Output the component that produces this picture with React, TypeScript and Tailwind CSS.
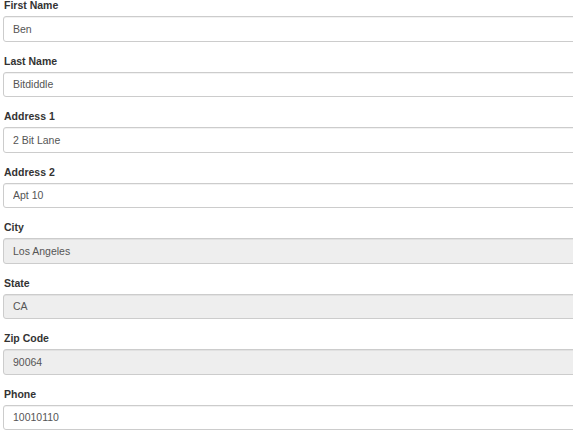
const fields = [
  { label: 'First Name', value: 'Ben', disabled: false },
  { label: 'Last Name', value: 'Bitdiddle', disabled: false },
  { label: 'Address 1', value: '2 Bit Lane', disabled: false },
  { label: 'Address 2', value: 'Apt 10', disabled: false },
  { label: 'City', value: 'Los Angeles', disabled: true },
  { label: 'State', value: 'CA', disabled: true },
  { label: 'Zip Code', value: '90064', disabled: true },
  { label: 'Phone', value: '10010110', disabled: false },
]

export default function App() {
  return (
    <div className="w-[573px] h-[430px] overflow-hidden bg-white font-['Liberation_Sans',Arial,sans-serif] text-[#333]">
      <form className="mt-[-1.75px] pl-[3px] w-[620px]">
        {fields.map((f) => (
          <div key={f.label} className="mb-[12.25px]">
            <label className="block text-[10.5px] leading-[15px] font-bold mb-[2.75px] pl-[1px]">{f.label}</label>
            <input
              readOnly
              disabled={f.disabled}
              value={f.value}
              className={`block w-full h-[25.5px] px-[9px] text-[10.5px] text-[#555] border-[0.75px] border-[#ccc] rounded-[3px] shadow-[inset_0_0.75px_0.75px_rgba(0,0,0,0.075)] outline-none ${
                f.disabled ? 'bg-[#eee]' : 'bg-white'
              }`}
            />
          </div>
        ))}
      </form>
    </div>
  )
}
